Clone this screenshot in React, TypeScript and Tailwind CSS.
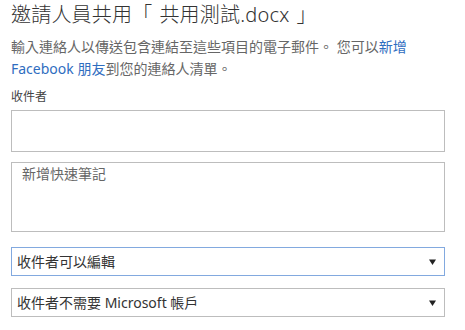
import React from "react";

const font = { fontFamily: '"Segoe UI", "Noto Sans", "Noto Sans CJK TC", sans-serif' };

function Arrow() {
  return (
    <svg width="7" height="6" viewBox="0 0 7 6" className="shrink-0">
      <path d="M0 0.5 H7 L3.5 6 Z" fill="#222" />
    </svg>
  );
}

export default function App() {
  return (
    <div className="w-[465px] h-[330px] bg-white overflow-hidden" style={font}>
      <div className="pl-[11px] w-[445px] flex flex-col">
        <h1 className="text-[20px] leading-[30px] text-[#333] font-light whitespace-nowrap tracking-[0.2px]">
          邀請人員共用<span className="mr-[7px]">「</span>共用測試.docx<span className="ml-[7px]">」</span>
        </h1>
        <p className="mt-[6px] text-[14px] leading-[22px] text-[#666]">
          輸入連絡人以傳送包含連結至這些項目的電子郵件。 您可以
          <span className="text-[#2f6dbf]">新增 Facebook 朋友</span>
          到您的連絡人清單。
        </p>
        <div className="mt-[8px] text-[12px] leading-[18px] text-[#444]">收件者</div>
        <div className="mt-[4px] h-[42px] border border-[#bdbdbd] bg-white" />
        <div className="mt-[10px] h-[70px] border border-[#bdbdbd] bg-white px-[10px] pt-[1px]">
          <div className="text-[14px] leading-[20px] text-[#666]">新增快速筆記</div>
        </div>
        <div className="mt-[15px] h-[29px] border border-[#82a9df] bg-white flex items-center justify-between pl-[5px] pr-[8px]">
          <span className="text-[14px] leading-[20px] text-[#333]">收件者可以編輯</span>
          <Arrow />
        </div>
        <div className="mt-[12px] h-[29px] border border-[#bdbdbd] bg-white flex items-center justify-between pl-[5px] pr-[8px]">
          <span className="text-[14px] leading-[20px] text-[#333]">收件者不需要 Microsoft 帳戶</span>
          <Arrow />
        </div>
      </div>
    </div>
  );
}
